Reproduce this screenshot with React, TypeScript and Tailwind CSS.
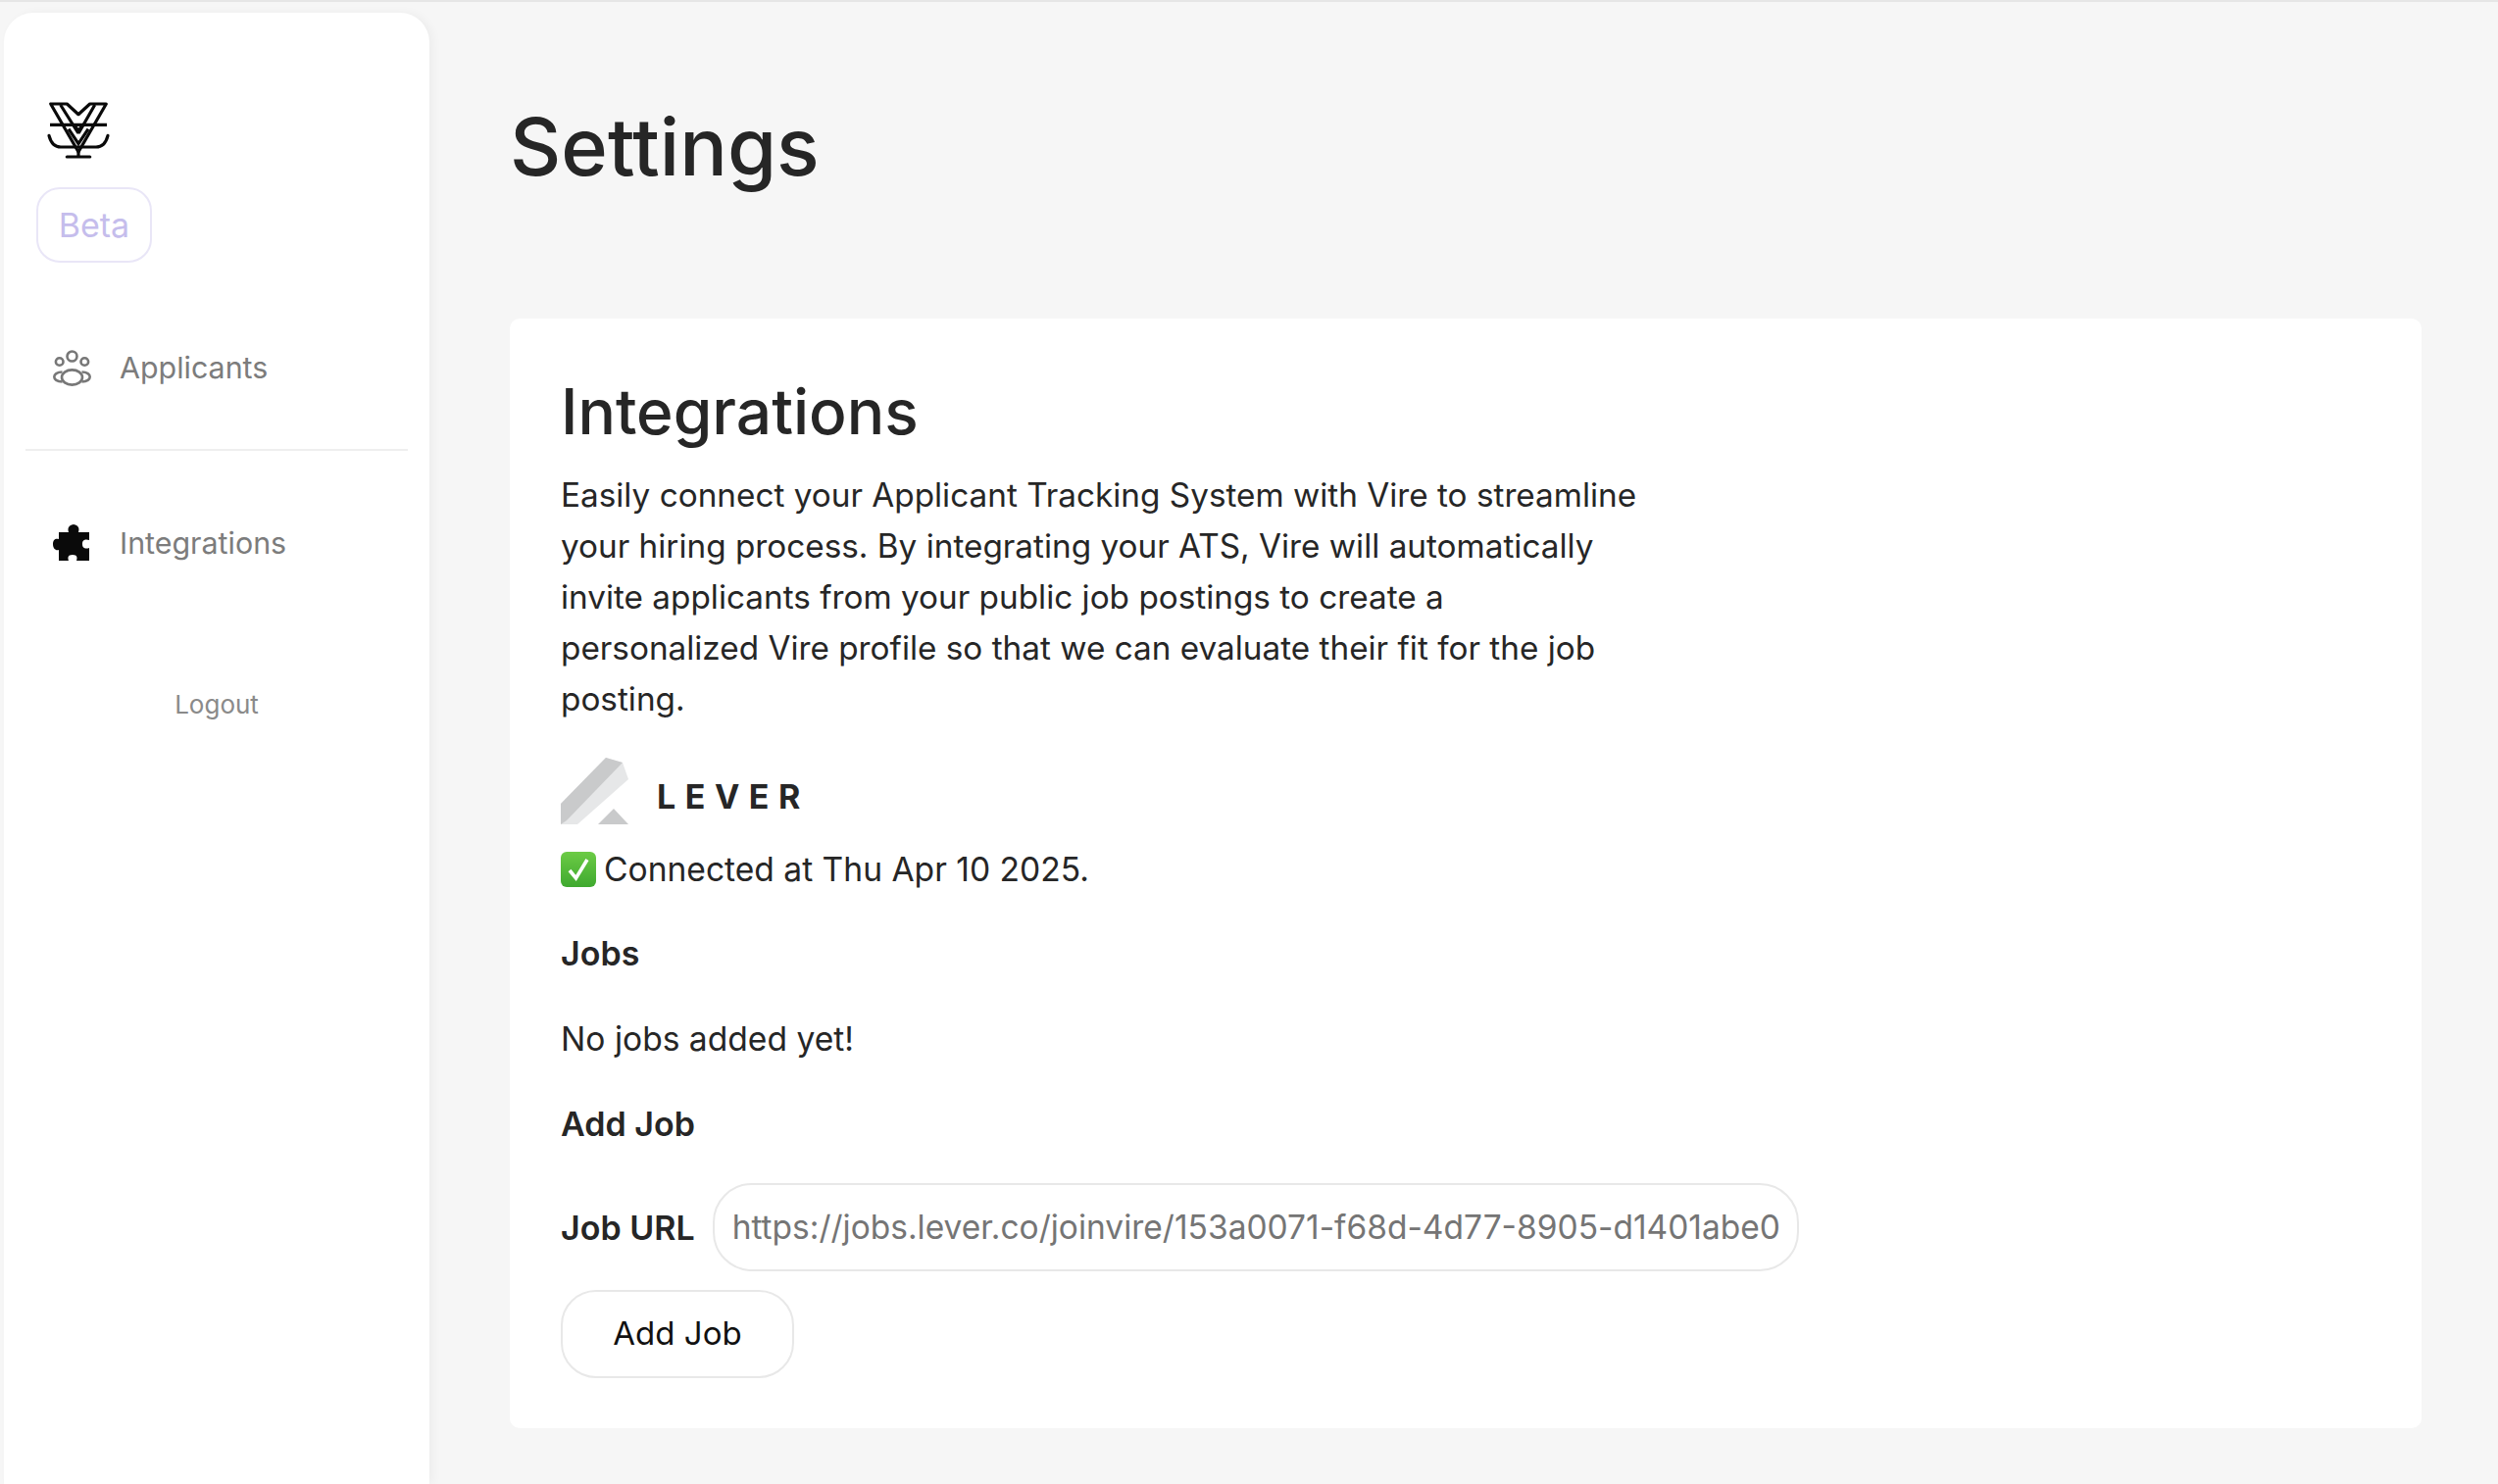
const FONT = "font-['Inter',sans-serif]"

function VireLogo() {
  return (
    <svg width="64" height="60" viewBox="0 0 64 60" fill="none" stroke="#0a0a0a" strokeWidth="3.2" className="ml-[22px]">
      <path d="M3.7 3 H20.3 L32 13.7 L43.7 3 H60.3 L32 52 Z" strokeLinejoin="round" />
      <path d="M13.7 4 L31.3 32 L32.7 32 L48.7 4" />
      <path d="M3 24.3 H61" />
      <path d="M27 24.3 L32 30 L37 24.3" />
      <path d="M22 28.7 L32 43.7 L42 28.7" />
      <path d="M2 35.3 C4 43 8 47 14 47 H50 C56 47 60 43 62 35.3" strokeLinecap="round" />
      <path d="M32 50 V57" />
      <path d="M20.3 57 H43.7" strokeLinecap="round" />
    </svg>
  )
}

function UsersIcon() {
  return (
    <svg width="40" height="38" viewBox="0 0 40 38" fill="none" stroke="#777777" strokeWidth="2.6">
      <circle cx="19.5" cy="6.5" r="5" />
      <circle cx="6.7" cy="12" r="3.8" />
      <circle cx="32.3" cy="12" r="3.8" />
      <ellipse cx="19.5" cy="28" rx="10.5" ry="7.6" />
      <path d="M9.5 22.5 C4 22.5 1.3 25 1.3 27.5 C1.3 30 4 32.5 9.5 32.5" />
      <path d="M29.5 22.5 C35 22.5 37.7 25 37.7 27.5 C37.7 30 35 32.5 29.5 32.5" />
    </svg>
  )
}

function PuzzleIcon() {
  return (
    <svg width="40" height="38" viewBox="0 0 40 38" fill="#0a0a0a">
      <path d="M12 8 H16 C15 5 15 1 21 0 C27 1 27 5 26 8 H37 V16 C34 15 30 15 30 20 C30 25 34 25 37 24 V37 H24 C25 34 25 31 20 31 C15 31 15 34 16 37 H6 V26 C3 27 0 25 0 20 C0 15 3 14 6 15 V8 Z" />
    </svg>
  )
}

function LeverLogo() {
  return (
    <svg width="70" height="70" viewBox="0 0 70 70" className="shrink-0">
      <path d="M0 47 L46 0 L63 5 L69 22 L17 68 H0 Z" fill="#e6e7e8" />
      <path d="M0 47 L46 0 L63 5 L6 64 L0 68 Z" fill="#c9cacb" />
      <path d="M38 68 L54 52 L69 68 Z" fill="#c9cacb" />
    </svg>
  )
}

function CheckEmoji() {
  return (
    <svg width="36" height="36" viewBox="0 0 36 36" className="shrink-0">
      <defs>
        <linearGradient id="emoji" x1="0" y1="0" x2="0" y2="1">
          <stop offset="0" stopColor="#6ccb45" />
          <stop offset="1" stopColor="#3fa92f" />
        </linearGradient>
      </defs>
      <rect width="36" height="36" rx="6" fill="url(#emoji)" />
      <path d="M9 19 L15.5 27 L27 8" fill="none" stroke="#ffffff" strokeWidth="3.6" />
    </svg>
  )
}

export default function App() {
  return (
    <div className={`${FONT} flex h-[1514px] w-[2548px] overflow-hidden border-t-2 border-[#e6e6e6] bg-[#f6f6f6] text-[#262626]`}>
      <aside className="ml-[4px] mt-[11px] w-[434px] shrink-0 rounded-t-[30px] bg-white px-[22px] pt-[90px] shadow-[4px_0_10px_rgba(0,0,0,0.04)]">
        <VireLogo />
        <div className="ml-[11px] mt-[28px] flex h-[77px] w-[118px] items-center justify-center rounded-[24px] border-2 border-[#e9e6f7] text-[34px] text-[#c5bdec]">
          Beta
        </div>
        <div className="mt-[85px] flex items-center pl-[28px] text-[30.4px] text-[#7c7c7c]">
          <UsersIcon />
          <span className="ml-[28px]">Applicants</span>
        </div>
        <div className="mt-[59px] h-[2px] bg-[#efefef]" />
        <div className="mt-[72px] flex items-center pl-[28px] text-[30.4px] text-[#7c7c7c]">
          <PuzzleIcon />
          <span className="ml-[28px]">Integrations</span>
        </div>
        <div className="mt-[122px] text-center text-[26px] text-[#8a8a8a]">Logout</div>
      </aside>
      <main className="ml-[82px] w-[1950px]">
        <h1 className="mt-[98px] text-[81px] font-medium leading-[100px]">Settings</h1>
        <section className="mt-[125px] h-[1132px] rounded-[10px] bg-white px-[52px] pt-[55px]">
          <h2 className="text-[64px] font-medium leading-[80px]">Integrations</h2>
          <p className="mt-[19px] w-[1105px] text-[33.3px] leading-[52px]">
            Easily connect your Applicant Tracking System with Vire to streamline your hiring process. By integrating your ATS, Vire will automatically invite applicants from your public job postings to create a personalized Vire profile so that we can evaluate their fit for the job posting.
          </p>
          <div className="mt-[34px] flex items-end">
            <LeverLogo />
            <span className="mb-[5px] ml-[28px] text-[34px] font-bold tracking-[0.28em]">LEVER</span>
          </div>
          <div className="mt-[18px] flex items-center text-[33.6px] leading-[52px]">
            <CheckEmoji />
            <span className="ml-[8px]">Connected at Thu Apr 10 2025.</span>
          </div>
          <div className="mt-[34px] text-[34px] font-semibold leading-[52px]">Jobs</div>
          <div className="mt-[35px] text-[33.6px] leading-[52px]">No jobs added yet!</div>
          <div className="mt-[35px] text-[34px] font-semibold leading-[52px]">Add Job</div>
          <div className="mt-[34px] flex items-center gap-[18px]">
            <label className="text-[34px] font-semibold">Job URL</label>
            <input
              readOnly
              placeholder="https://jobs.lever.co/joinvire/153a0071-f68d-4d77-8905-d1401abe0"
              className="h-[90px] w-[1108px] rounded-[40px] border-2 border-[#e8e8e8] px-[18px] text-[33.5px] placeholder:text-[#757575]"
            />
          </div>
          <button className="mt-[19px] h-[90px] w-[238px] rounded-[36px] border-2 border-[#e8e8e8] text-[33px] text-[#111111]">
            Add Job
          </button>
        </section>
      </main>
    </div>
  )
}
